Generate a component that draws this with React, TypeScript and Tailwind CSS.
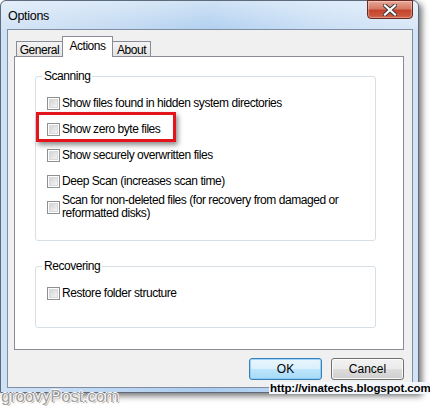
import React from "react";

const font = { fontFamily: '"Liberation Sans", Arial, sans-serif' };

function Check() {
  return (
    <div className="w-[13px] h-[13px] shrink-0 border border-[#8e8f8f] bg-white flex items-center justify-center">
      <div className="w-[9px] h-[9px] bg-[linear-gradient(135deg,#d4d4d4,#f4f4f4)] border border-[#d9d9d9]" />
    </div>
  );
}

function Row({ label, lines }: { label?: string; lines?: string[] }) {
  if (lines) {
    return (
      <div className="flex items-center gap-[2px] h-[26px]">
        <Check />
        <div className="leading-[13px]">
          {lines.map((l) => (
            <div key={l}>{l}</div>
          ))}
        </div>
      </div>
    );
  }
  return (
    <div className="flex items-center gap-[2px] h-[26px]">
      <Check />
      <span>{label}</span>
    </div>
  );
}

function Group({ title, children, h }: { title: string; children: React.ReactNode; h: string }) {
  return (
    <div className={`relative border border-[#d5dfe5] rounded-[3px] ${h}`}>
      <div className="absolute -top-[8px] left-[6px] bg-white px-[2px] leading-[14px]">{title}</div>
      {children}
    </div>
  );
}

export default function App() {
  return (
    <div className="relative w-[430px] h-[406px] bg-white overflow-hidden text-[12px] text-black tracking-[-0.45px]" style={font}>
      {/* window */}
      <div className="w-[419px] h-[393px] border border-[#5d6b7d] rounded-t-[6px] bg-[linear-gradient(90deg,#cfe1f5,#bcd6f1_30%,#a9cbee_50%,#c3dbf4_75%,#d3e4f6)] shadow-[3px_3px_6px_rgba(0,0,0,0.55)] flex flex-col">
        {/* title bar */}
        <div className="h-[28px] flex items-start justify-between shrink-0 bg-[linear-gradient(180deg,rgba(255,255,255,0.45),rgba(255,255,255,0.1))] rounded-t-[6px]">
          <div className="pl-[7px] pt-[8px] text-[12.5px] leading-[14px] tracking-[-0.3px]">Options</div>
          <div className="mr-[5px] w-[46px] h-[19px] -mt-px rounded-b-[4px] border border-[#6a2a20] bg-[linear-gradient(180deg,#e9a696_0%,#d57a66_45%,#c5432c_55%,#cf5f45_100%)] flex items-center justify-center shadow-[inset_0_0_1px_1px_rgba(255,255,255,0.35)]">
            <svg width="14" height="12" viewBox="0 0 14 12">
              <path d="M2 1.5 L12 10.5 M12 1.5 L2 10.5" stroke="#3b3b3b" strokeWidth="4.2" strokeLinecap="square" />
              <path d="M2 1.5 L12 10.5 M12 1.5 L2 10.5" stroke="#ffffff" strokeWidth="2.2" strokeLinecap="square" />
            </svg>
          </div>
        </div>
        {/* client */}
        <div className="ml-[6px] w-[406px] h-[359px] border border-[#7f8ea3] bg-[#f0f0f0] flex flex-col">
          {/* tabs */}
          <div className="mt-[6px] ml-[8px] h-[20px] flex items-end relative z-10">
            <div className="w-[47px] h-[15px] border border-[#898c95] border-b-0 bg-[linear-gradient(180deg,#f3f3f3,#e4e4e4)] flex items-center justify-center leading-[14px] pt-[2px]">General</div>
            <div className="-ml-px w-[51px] h-[21px] -mb-px border border-[#898c95] border-b-0 bg-white flex items-start justify-center pt-[2px] leading-[14px]">Actions</div>
            <div className="-ml-px w-[39px] h-[15px] border border-[#898c95] border-b-0 bg-[linear-gradient(180deg,#f3f3f3,#e4e4e4)] flex items-center justify-center leading-[14px] pt-[2px]">About</div>
          </div>
          <div className="ml-[6px] w-[390px] h-[294px] border border-[#898c95] bg-white pl-[20px] pr-[27px] pt-[19px] flex flex-col gap-[25px]">
            <Group title="Scanning" h="h-[165px]">
              <div className="pl-[11px] pt-[13px] flex flex-col">
                <Row label="Show files found in hidden system directories" />
                <Row label="Show zero byte files" />
                <Row label="Show securely overwritten files" />
                <Row label="Deep Scan (increases scan time)" />
                <Row lines={["Scan for non-deleted files (for recovery from damaged or", "reformatted disks)"]} />
              </div>
            </Group>
            <Group title="Recovering" h="h-[62px]">
              <div className="pl-[11px] pt-[13px] flex flex-col">
                <Row label="Restore folder structure" />
              </div>
            </Group>
          </div>
          <div className="flex justify-end gap-[9px] pr-[8px] pt-[8px]">
            <div className="w-[73px] h-[22px] rounded-[3px] border border-[#3c7fb1] bg-[linear-gradient(180deg,#eaf6fd_0%,#d9f0fc_50%,#bee6fd_50%,#a7d9f5_100%)] shadow-[inset_0_0_0_1px_rgba(120,200,255,0.7)] flex items-center justify-center tracking-[0px]">OK</div>
            <div className="w-[73px] h-[22px] rounded-[3px] border border-[#707070] bg-[linear-gradient(180deg,#f2f2f2_0%,#ebebeb_50%,#dddddd_50%,#cfcfcf_100%)] shadow-[inset_0_0_0_1px_rgba(255,255,255,0.8)] flex items-center justify-center tracking-[0px]">Cancel</div>
          </div>
        </div>
      </div>

      {/* highlight */}
      <div className="absolute left-[36px] top-[112px] w-[140px] h-[30px] border-[3px] border-[#e3141b] shadow-[2px_3px_5px_rgba(0,0,0,0.45)]" />

      {/* watermarks */}
      <div className="absolute left-[269px] top-[382px] px-px bg-[#f3f6fa] text-[11.5px] leading-[12px] tracking-[-0.1px] text-black font-semibold" style={{ fontFamily: '"Liberation Sans", Arial, sans-serif' }}>
        http://vinatechs.blogspot.com
      </div>
      <div
        className="absolute left-[1px] top-[388px] text-[17px] leading-[17px] tracking-[-0.3px] text-[#a0a0a0]"
        style={{ fontFamily: '"Liberation Sans", Arial, sans-serif', textShadow: "1px 0 0 #fff, -1px 0 0 #fff, 0 1px 0 #fff, 0 -1px 0 #fff, 1px 1px 1px #777" }}
      >
        groovyPost.com
      </div>
    </div>
  );
}
